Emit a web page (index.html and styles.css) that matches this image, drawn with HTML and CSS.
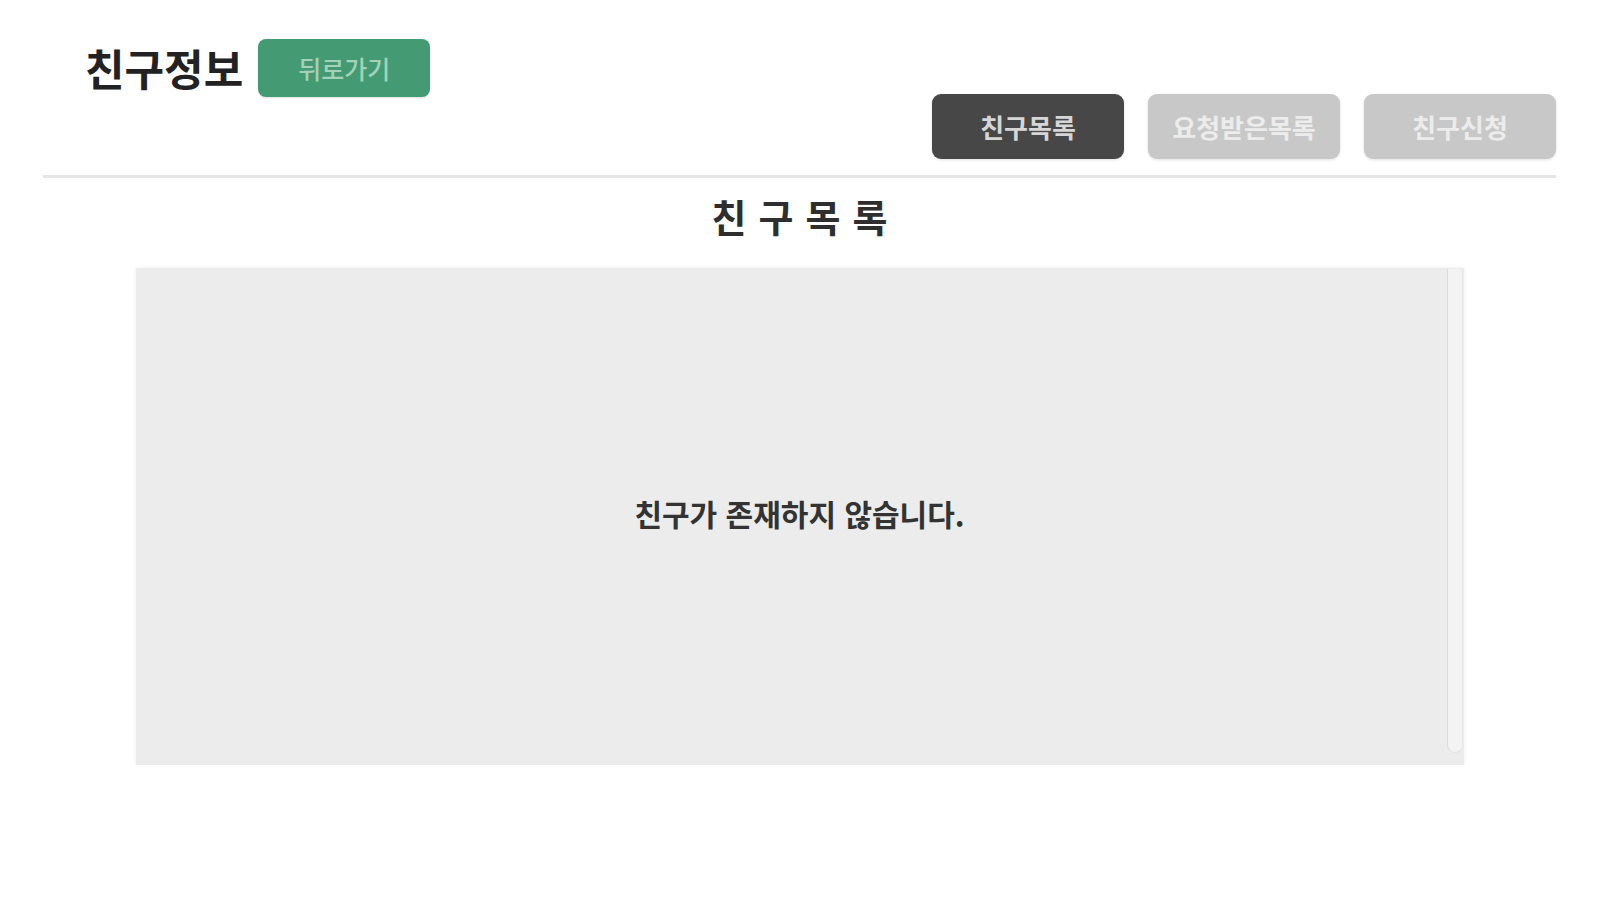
FILE: index.html
```html
<!DOCTYPE html>
<html lang="ko">
<head>
<meta charset="utf-8">
<title>친구정보</title>
<link rel="stylesheet" href="styles.css">
</head>
<body>
<div class="page">
  <header class="header">
    <div class="brand">
      <h1 class="brand-title">친구정보</h1>
      <button class="back-btn">뒤로가기</button>
    </div>
    <nav class="tabs">
      <button class="tab tab-active">친구목록</button>
      <button class="tab">요청받은목록</button>
      <button class="tab">친구신청</button>
    </nav>
  </header>
  <div class="divider"></div>
  <h2 class="section-title">친구목록</h2>
  <section class="panel">
    <p class="empty-msg">친구가 존재하지 않습니다.</p>
    <div class="scroll-track"></div>
  </section>
</div>
</body>
</html>
```

FILE: styles.css
```css
* {
  box-sizing: border-box;
}

body {
  margin: 0;
  background: #ffffff;
  font-family: "Noto Sans CJK KR", "Noto Sans", sans-serif;
  color: #2a2a2a;
}

.page {
  padding: 39px 43px 0;
}

.header {
  display: flex;
  justify-content: space-between;
  height: 120px;
}

.brand {
  display: flex;
  align-items: center;
  gap: 15px;
  padding-left: 42px;
  height: 58px;
  align-self: flex-start;
}

.brand-title {
  margin: 0;
  font-size: 43px;
  font-weight: 700;
  line-height: 1;
  color: #222222;
  position: relative;
  top: -1px;
}

.back-btn {
  width: 172px;
  height: 58px;
  border: none;
  border-radius: 8px;
  background: #449a73;
  color: #a3d2b8;
  font-family: inherit;
  font-size: 25px;
  font-weight: 500;
  padding: 0;
  box-shadow: 0 1px 2px rgba(0, 0, 0, 0.12);
}

.tabs {
  display: flex;
  gap: 24px;
  align-self: flex-end;
}

.tab {
  width: 192px;
  height: 65px;
  border: none;
  border-radius: 9px;
  background: #c8c8c8;
  color: #ececec;
  font-family: inherit;
  font-size: 26px;
  font-weight: 700;
  padding: 0;
  box-shadow: 0 1px 3px rgba(0, 0, 0, 0.12);
}

.tab-active {
  background: #474747;
  color: #d6d6d6;
}

.divider {
  margin-top: 16px;
  height: 3px;
  background: #e6e6e6;
}

.section-title {
  margin: 19px 0 33px;
  text-align: center;
  font-size: 38px;
  font-weight: 700;
  line-height: 1;
  letter-spacing: 12px;
  text-indent: 12px;
  color: #2e2e2e;
}

.panel {
  position: relative;
  width: 1328px;
  height: 497px;
  margin: 0 auto;
  padding-bottom: 8px;
  background: #ececec;
  box-shadow: 0 0 4px rgba(0, 0, 0, 0.08);
  display: flex;
  align-items: center;
  justify-content: center;
}

.empty-msg {
  margin: 0;
  font-size: 30px;
  font-weight: 700;
  color: #333333;
}

.scroll-track {
  position: absolute;
  top: 1px;
  right: 1px;
  bottom: 12px;
  width: 16px;
  border-radius: 0 0 8px 8px;
  background: #f3f3f3;
  border-left: 1px solid #dcdcdc;
  border-right: 1px solid #e8e8e8;
  border-bottom: 1px solid #e2e2e2;
}
```
